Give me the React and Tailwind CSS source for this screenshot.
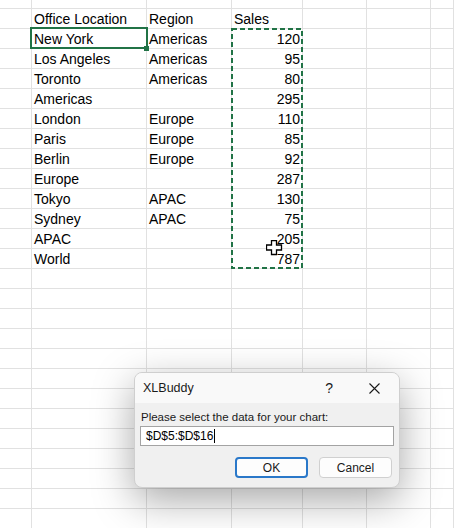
import React from "react";

const ROWS = [
  ["Office Location", "Region", "Sales", true],
  ["New York", "Americas", "120"],
  ["Los Angeles", "Americas", "95"],
  ["Toronto", "Americas", "80"],
  ["Americas", "", "295"],
  ["London", "Europe", "110"],
  ["Paris", "Europe", "85"],
  ["Berlin", "Europe", "92"],
  ["Europe", "", "287"],
  ["Tokyo", "APAC", "130"],
  ["Sydney", "APAC", "75"],
  ["APAC", "", "205"],
  ["World", "", "787"],
];

const EMPTY_ROWS = 14;

const cell =
  "h-[20px] border-r border-b border-[#e1e1e1] overflow-visible whitespace-nowrap pt-[2px] leading-[17px]";

function Row({ row }) {
  const [a, b, c, header] = row || [];
  return (
    <>
      <div className={cell} />
      <div className={`${cell} pl-[2px]`}>{a}</div>
      <div className={`${cell} pl-[2px]`}>{b}</div>
      <div className={`${cell} ${header ? "pl-[2px]" : "pr-[2px] text-right"}`}>{c}</div>
      <div className={cell} />
      <div className={cell} />
      <div className={cell} />
    </>
  );
}

export default function App() {
  return (
    <div
      className="relative h-[528px] w-[454px] overflow-hidden bg-white text-[14px] text-black"
      style={{ fontFamily: '"Liberation Sans", Arial, sans-serif' }}
    >
      {/* Sheet grid */}
      <div className="grid grid-cols-[32px_115px_85px_71px_64px_64px_1fr]">
        {Array.from({ length: 7 }).map((_, i) => (
          <div key={i} className="h-[9px] border-r border-b border-[#e1e1e1]" />
        ))}
        {ROWS.map((r, i) => (
          <Row key={i} row={r} />
        ))}
        {Array.from({ length: EMPTY_ROWS }).map((_, i) => (
          <Row key={`e${i}`} />
        ))}
      </div>

      {/* Active cell */}
      <div className="absolute left-[30px] top-[27px] h-[22px] w-[118px] border-2 border-[#217346]" />
      <div className="absolute left-[144px] top-[46px] h-[5px] w-[5px] bg-[#217346]" />

      {/* Copy marquee */}
      <svg className="absolute left-[231px] top-[28px]" width="72" height="241">
        <rect x="1" y="1" width="70" height="239" fill="none" stroke="#217346" strokeWidth="2" strokeDasharray="5 3" />
      </svg>

      {/* Cell cursor */}
      <svg className="absolute left-[266px] top-[240px]" width="17" height="16" viewBox="0 0 17 16">
        <polygon
          points="5.5,0.5 10.5,0.5 10.5,5 15.5,5 15.5,10 10.5,10 10.5,14.5 5.5,14.5 5.5,10 0.5,10 0.5,5 5.5,5"
          fill="white"
          stroke="black"
          strokeWidth="1.3"
        />
      </svg>

      {/* Dialog */}
      <div
        className="absolute left-[134px] top-[372px] flex w-[266px] flex-col overflow-hidden rounded-[8px] border border-[#cfcfcf] bg-[#f0f0f0] shadow-[0_12px_40px_rgba(0,0,0,0.35)]"
        style={{ fontFamily: '"Liberation Sans", Arial, sans-serif' }}
      >
        <div className="flex h-[30px] items-center bg-[#f9f9f9] pl-[8px] text-[12.5px] text-[#1a1a1a]">
          <span className="flex-1">XLBuddy</span>
          <span className="mr-[36px] text-[14px]">?</span>
          <svg className="mr-[19px]" width="11" height="11" viewBox="0 0 11 11">
            <path d="M0.5 0.5 L10.5 10.5 M10.5 0.5 L0.5 10.5" stroke="#1a1a1a" strokeWidth="1.1" />
          </svg>
        </div>
        <div className="flex flex-col px-[5px] pb-[9px] pt-[6px]">
          <div className="pl-[1px] text-[11.5px] leading-[16px] text-[#1a1a1a]">
            Please select the data for your chart:
          </div>
          <div className="mt-[1px] flex h-[20px] items-center border border-[#a3a3a3] bg-white pl-[5px] text-[12px]">
            <span>$D$5:$D$16</span>
            <span className="ml-[1px] h-[14px] w-px bg-black" />
          </div>
          <div className="mt-[11px] flex justify-end gap-[11px] pr-[2px]">
            <button className="flex h-[21px] w-[73px] items-center justify-center rounded-[4px] border-2 border-[#2a78c9] bg-[#fdfdfd] text-[12px] text-[#1a1a1a]">
              OK
            </button>
            <button className="flex h-[21px] w-[73px] items-center justify-center rounded-[4px] border border-[#d0d0d0] bg-[#fdfdfd] text-[12px] text-[#1a1a1a]">
              Cancel
            </button>
          </div>
        </div>
      </div>
    </div>
  );
}
